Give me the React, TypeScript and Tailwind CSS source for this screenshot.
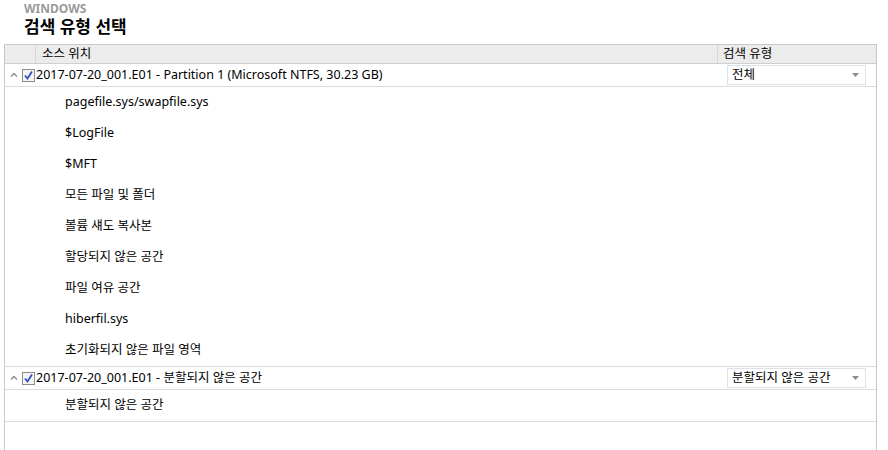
import React from "react";

const font = { fontFamily: '"Noto Sans", "Noto Sans CJK KR", sans-serif' };

function Chevron() {
  return (
    <svg width="8" height="6" viewBox="0 0 8 6" className="shrink-0">
      <path d="M1 4.5 L4 1.5 L7 4.5" fill="none" stroke="#8a8a8a" strokeWidth="1.3" />
    </svg>
  );
}

function Check() {
  return (
    <div className="w-[13px] h-[13px] border border-[#8d8d8d] bg-[#f4f4f4] flex items-center justify-center shrink-0">
      <svg width="11" height="11" viewBox="0 0 11 11">
        <path d="M2 5.5 L4.5 8.5 L9 1.5" fill="none" stroke="#2d4fbf" strokeWidth="1.8" />
      </svg>
    </div>
  );
}

function Dropdown({ label }: { label: string }) {
  return (
    <div className="w-[139px] h-[20px] border border-[#dde2e8] bg-white flex items-center justify-between pl-[4px] pr-[6px] text-[12.5px] text-black">
      <span>{label}</span>
      <svg width="7" height="4" viewBox="0 0 7 4">
        <path d="M0 0 L7 0 L3.5 4 Z" fill="#8c8c8c" />
      </svg>
    </div>
  );
}

function GroupRow({ label, value }: { label: string; value: string }) {
  return (
    <div className="flex h-[23px] border-b border-[#dcdcdc]">
      <div className="flex items-center flex-1 pl-[5px]">
        <Chevron />
        <div className="ml-[4px]">
          <Check />
        </div>
        <span className="ml-[1px] text-[12.5px] text-black whitespace-nowrap">{label}</span>
      </div>
      <div className="w-[159px] flex items-center pl-[10px]">
        <Dropdown label={value} />
      </div>
    </div>
  );
}

function Child({ label }: { label: string }) {
  return (
    <div className="h-[31px] flex items-center pl-[60px] text-[12.5px] text-black">{label}</div>
  );
}

export default function App() {
  const children = [
    "pagefile.sys/swapfile.sys",
    "$LogFile",
    "$MFT",
    "모든 파일 및 폴더",
    "볼륨 섀도 복사본",
    "할당되지 않은 공간",
    "파일 여유 공간",
    "hiberfil.sys",
    "초기화되지 않은 파일 영역",
  ];
  return (
    <div className="w-[888px] h-[450px] bg-white overflow-hidden" style={font}>
      <div className="pl-[24px] pt-[3px] h-[44px] flex flex-col">
        <div className="text-[12px] font-bold text-[#9a9a9a] leading-[12px]">WINDOWS</div>
        <div className="mt-[2px] text-[17px] font-bold text-black leading-[19px]">검색 유형 선택</div>
      </div>
      <div className="ml-[4px] w-[873px] h-[406px] border-l border-r border-t border-[#c8c8c8]">
        <div className="flex h-[19px] bg-[#ececec] border-b border-[#cfcfcf] text-[12.5px] text-black">
          <div className="w-[31px] border-r border-[#d8d8d8]" />
          <div className="flex-1 pl-[6px] flex items-center border-r border-[#d8d8d8]">소스 위치</div>
          <div className="w-[158px] pl-[5px] flex items-center">검색 유형</div>
        </div>
        <GroupRow label="2017-07-20_001.E01 - Partition 1 (Microsoft NTFS, 30.23 GB)" value="전체" />
        <div className="border-b border-[#dcdcdc]">
          {children.map((c) => (
            <Child key={c} label={c} />
          ))}
        </div>
        <GroupRow label="2017-07-20_001.E01 - 분할되지 않은 공간" value="분할되지 않은 공간" />
        <div className="border-b border-[#dcdcdc]">
          <Child label="분할되지 않은 공간" />
        </div>
      </div>
    </div>
  );
}
